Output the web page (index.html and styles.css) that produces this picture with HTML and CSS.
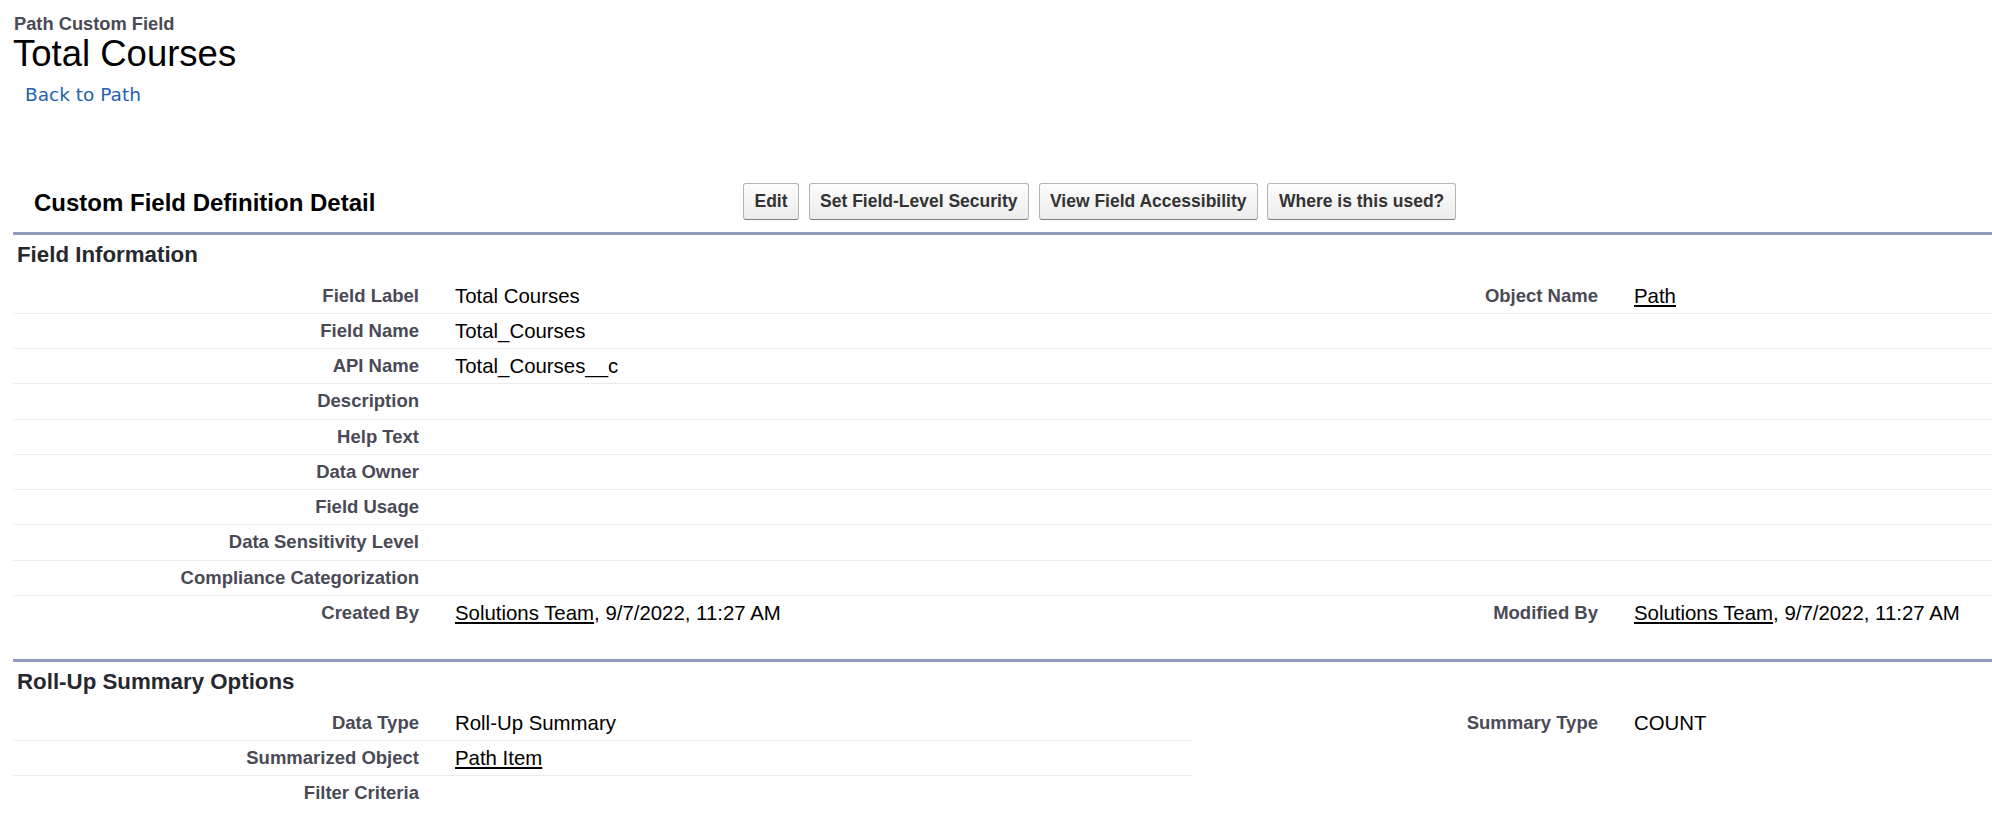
FILE: index.html
```html
<!DOCTYPE html>
<html lang="en">
<head>
<meta charset="utf-8">
<title>Total Courses - Path Custom Field</title>
<link rel="stylesheet" href="styles.css">
</head>
<body>
<div class="page">
  <div class="page-title">
    <div class="page-type">Path Custom Field</div>
    <h1 class="page-desc">Total Courses</h1>
    <div class="breadcrumb"><a href="#">Back to Path</a></div>
  </div>

  <div class="block">
    <div class="pb-header">
      <h2 class="pb-title">Custom Field Definition Detail</h2>
      <div class="pb-buttons">
        <button class="btn" type="button">Edit</button>
        <button class="btn" type="button">Set Field-Level Security</button>
        <button class="btn" type="button">View Field Accessibility</button>
        <button class="btn" type="button">Where is this used?</button>
      </div>
    </div>

    <section class="sub">
      <h3 class="sub-title">Field Information</h3>
      <div class="detail">
        <div class="row">
          <div class="label">Field Label</div><div class="data">Total Courses</div>
          <div class="label">Object Name</div><div class="data"><a href="#">Path</a></div>
        </div>
        <div class="row">
          <div class="label">Field Name</div><div class="data">Total_Courses</div>
          <div class="label"></div><div class="data"></div>
        </div>
        <div class="row">
          <div class="label">API Name</div><div class="data">Total_Courses__c</div>
          <div class="label"></div><div class="data"></div>
        </div>
        <div class="row">
          <div class="label">Description</div><div class="data"></div>
          <div class="label"></div><div class="data"></div>
        </div>
        <div class="row">
          <div class="label">Help Text</div><div class="data"></div>
          <div class="label"></div><div class="data"></div>
        </div>
        <div class="row">
          <div class="label">Data Owner</div><div class="data"></div>
          <div class="label"></div><div class="data"></div>
        </div>
        <div class="row">
          <div class="label">Field Usage</div><div class="data"></div>
          <div class="label"></div><div class="data"></div>
        </div>
        <div class="row">
          <div class="label">Data Sensitivity Level</div><div class="data"></div>
          <div class="label"></div><div class="data"></div>
        </div>
        <div class="row">
          <div class="label">Compliance Categorization</div><div class="data"></div>
          <div class="label"></div><div class="data"></div>
        </div>
        <div class="row last">
          <div class="label">Created By</div><div class="data"><a href="#">Solutions Team</a>, 9/7/2022, 11:27 AM</div>
          <div class="label">Modified By</div><div class="data"><a href="#">Solutions Team</a>, 9/7/2022, 11:27 AM</div>
        </div>
      </div>
    </section>

    <section class="sub sub-next">
      <h3 class="sub-title">Roll-Up Summary Options</h3>
      <div class="detail split">
        <div class="half">
          <div class="row half-row">
            <div class="label">Data Type</div><div class="data">Roll-Up Summary</div>
          </div>
          <div class="row half-row">
            <div class="label">Summarized Object</div><div class="data"><a href="#">Path Item</a></div>
          </div>
          <div class="row half-row last">
            <div class="label">Filter Criteria</div><div class="data"></div>
          </div>
        </div>
        <div class="half">
          <div class="row half-row last">
            <div class="label">Summary Type</div><div class="data">COUNT</div>
          </div>
        </div>
      </div>
    </section>
  </div>
</div>
</body>
</html>
```

FILE: styles.css
```css
html, body {
  margin: 0;
  padding: 0;
  background: #ffffff;
}

body {
  font-family: "Liberation Sans", Arial, Helvetica, sans-serif;
  color: #000000;
  overflow: hidden;
}

.page {
  padding: 14px 0 0 13px;
}

/* ---------- page title ---------- */
.page-type {
  font-size: 18.3px;
  font-weight: bold;
  line-height: 20px;
  color: #4a4a56;
  padding-left: 1px;
}

.page-desc {
  margin: 0;
  font-size: 36.5px;
  font-weight: normal;
  line-height: 40px;
}

.breadcrumb {
  margin-top: 9px;
  padding-left: 12px;
  font-family: "DejaVu Sans", Verdana, sans-serif;
  font-size: 18.5px;
  line-height: 24px;
}

.breadcrumb a {
  color: #2462ad;
  text-decoration: none;
}

/* ---------- page block ---------- */
.block {
  width: 2358px;
  margin-top: 76px;
}

.pb-header {
  display: flex;
  align-items: flex-start;
  height: 37px;
  padding-bottom: 12px;
}

.pb-title {
  box-sizing: border-box;
  width: 708px;
  margin: 0;
  padding: 6px 0 0 21px;
  font-size: 24px;
  font-weight: bold;
  line-height: 28px;
}

.pb-buttons {
  display: flex;
  gap: 9.5px;
  margin-left: 22px;
}

.btn {
  box-sizing: border-box;
  height: 37px;
  padding: 0 10.5px;
  font-family: "Liberation Sans", Arial, Helvetica, sans-serif;
  font-size: 17.5px;
  font-weight: bold;
  color: #333333;
  background: linear-gradient(#fdfdfd, #ececec);
  border: 1px solid #b5b5b5;
  border-bottom-color: #7f7f7f;
  border-radius: 3px;
  cursor: pointer;
}

/* ---------- sub sections ---------- */
.sub {
  border-top: 3px solid #8f9cbf;
}

.sub-next {
  margin-top: 28px;
}

.sub-title {
  margin: 0;
  padding: 7px 0 0 4px;
  font-size: 22.3px;
  font-weight: bold;
  line-height: 26px;
  color: #27282e;
}

.detail {
  margin-top: 10.5px;
}

.row {
  box-sizing: border-box;
  display: grid;
  grid-template-columns: 424px 755px 424px 755px;
  height: 35.25px;
  border-bottom: 1px solid #ececec;
}

.row.last {
  border-bottom: none;
}

.label {
  padding: 6px 18px 0 0;
  text-align: right;
  font-size: 18.5px;
  font-weight: bold;
  line-height: 22px;
  color: #4a4a56;
  white-space: nowrap;
}

.data {
  padding: 5px 0 0 18px;
  font-size: 20.4px;
  line-height: 24px;
  color: #000000;
  white-space: nowrap;
}

.data a {
  color: #000000;
  text-decoration: underline;
  text-decoration-thickness: 2px;
  text-underline-offset: 2px;
}

.split {
  display: flex;
}

.half {
  width: 1179px;
}

.half-row {
  grid-template-columns: 424px 755px;
}
```
